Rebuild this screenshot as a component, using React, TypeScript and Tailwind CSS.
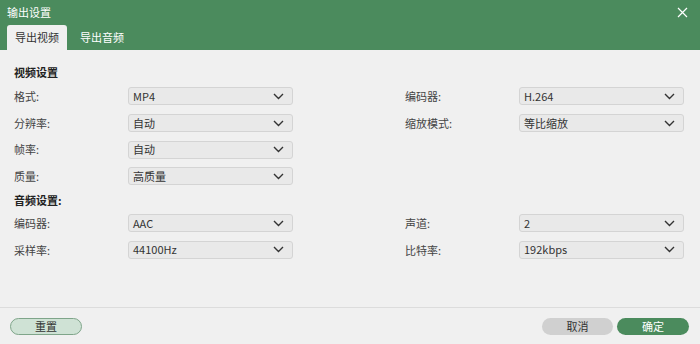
import React, { useState } from "react";

const font = { fontFamily: '"Noto Sans CJK SC", "Noto Sans", sans-serif' };

function Chevron() {
  return (
    <svg width="11" height="7" viewBox="0 0 11 7" className="shrink-0">
      <path d="M1 1 L5.5 5.5 L10 1" fill="none" stroke="#333" strokeWidth="1.4" />
    </svg>
  );
}

function Select({ value }: { value: string }) {
  return (
    <div className="flex h-[18px] w-[165px] items-center justify-between rounded-[3px] border border-[#d4d4d4] bg-[#e9e9e9] pl-[4px] pr-[8px] text-[11px] text-[#333]">
      <span className="leading-none">{value}</span>
      <Chevron />
    </div>
  );
}

function Field({ label, value }: { label: string; value: string }) {
  return (
    <div className="flex items-center">
      <span className="w-[114px] text-[11px] text-[#444]">{label}</span>
      <Select value={value} />
    </div>
  );
}

function Row({ left, right }: { left: [string, string]; right?: [string, string] }) {
  return (
    <div className="flex h-[26.7px] items-center">
      <div className="w-[391px]">
        <Field label={left[0]} value={left[1]} />
      </div>
      {right && <Field label={right[0]} value={right[1]} />}
    </div>
  );
}

export default function App() {
  const [tab, setTab] = useState(0);
  const tabs = ["导出视频", "导出音频"];

  return (
    <div className="flex h-[344px] w-[700px] flex-col bg-[#f0f0f0]" style={font}>
      {/* header */}
      <div className="h-[50px] bg-[#4b8b5d] px-[7px]">
        <div className="flex h-[25px] items-center justify-between">
          <span className="text-[11px] text-white">输出设置</span>
          <svg width="11" height="11" viewBox="0 0 11 11" className="mr-[5px]">
            <path d="M1 1 L10 10 M10 1 L1 10" stroke="#fff" strokeWidth="1.2" />
          </svg>
        </div>
        <div className="flex h-[25px] items-end">
          {tabs.map((t, i) => (
            <button
              key={t}
              onClick={() => setTab(i)}
              className={
                i === tab
                  ? "flex h-[25px] w-[60px] items-center justify-center rounded-t-[3px] bg-[#f0f0f0] text-[11px] text-[#333]"
                  : "flex h-[25px] w-[70px] items-center justify-center text-[11px] text-white"
              }
            >
              {t}
            </button>
          ))}
        </div>
      </div>

      {/* body */}
      <div className="flex-1 pl-[14px]">
        <div className="mt-[11px] flex h-[22px] items-center text-[11px] font-bold text-[#222]">视频设置</div>
        <Row left={["格式:", "MP4"]} right={["编码器:", "H.264"]} />
        <Row left={["分辨率:", "自动"]} right={["缩放模式:", "等比缩放"]} />
        <Row left={["帧率:", "自动"]} />
        <Row left={["质量:", "高质量"]} />
        <div className="flex h-[20px] items-center text-[11px] font-bold text-[#222]">音频设置:</div>
        <Row left={["编码器:", "AAC"]} right={["声道:", "2"]} />
        <Row left={["采样率:", "44100Hz"]} right={["比特率:", "192kbps"]} />
      </div>

      {/* footer */}
      <div className="flex h-[37px] items-center justify-between border-t border-[#dcdcdc] px-[10px]">
        <button className="flex h-[17px] w-[72px] items-center justify-center rounded-full border border-[#7fa58a] bg-[#cfe2d5] text-[11px] text-[#333]">
          重置
        </button>
        <div className="flex gap-[4px] pr-[1px]">
          <button className="flex h-[17px] w-[71px] items-center justify-center rounded-full bg-[#d0d0d0] text-[11px] text-[#333]">
            取消
          </button>
          <button className="flex h-[17px] w-[72px] items-center justify-center rounded-full bg-[#4b8b5d] text-[11px] text-white">
            确定
          </button>
        </div>
      </div>
    </div>
  );
}
